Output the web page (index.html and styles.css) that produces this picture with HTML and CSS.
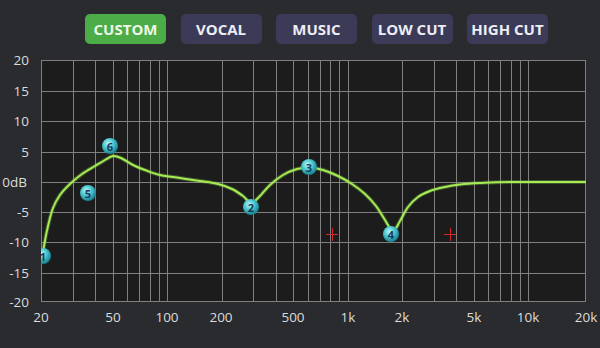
FILE: index.html
```html
<!DOCTYPE html>
<html lang="en">
<head>
    <meta charset="UTF-8">
    <meta name="viewport" content="width=device-width, initial-scale=1.0">
    <title>Equalizer</title>
    <link rel="stylesheet" href="styles.css">
</head>
<body>

    <!-- Preset buttons -->
    <div class="presets">
        <button class="preset active">CUSTOM</button>
        <button class="preset">VOCAL</button>
        <button class="preset">MUSIC</button>
        <button class="preset">LOW CUT</button>
        <button class="preset">HIGH CUT</button>
    </div>

    <!-- EQ curve -->
    <svg class="chart" width="600" height="298" viewBox="0 50 600 298">
        <defs>
            <clipPath id="plot-clip">
                <rect x="41" y="60" width="545" height="242"/>
            </clipPath>
            <radialGradient id="node-fill" cx="40%" cy="35%" r="65%">
                <stop offset="0" stop-color="#bff6f8"/>
                <stop offset="0.45" stop-color="#52ccd6"/>
                <stop offset="1" stop-color="#17808f"/>
            </radialGradient>
        </defs>

        <rect class="plot-bg" x="41" y="60" width="545" height="242"/>

        <g class="grid">
            <!-- dB lines -->
            <line x1="41" x2="586" y1="60.5" y2="60.5"/>
            <line x1="41" x2="586" y1="91.5" y2="91.5"/>
            <line x1="41" x2="586" y1="121.5" y2="121.5"/>
            <line x1="41" x2="586" y1="152.5" y2="152.5"/>
            <line x1="41" x2="586" y1="182.5" y2="182.5"/>
            <line x1="41" x2="586" y1="212.5" y2="212.5"/>
            <line x1="41" x2="586" y1="242.5" y2="242.5"/>
            <line x1="41" x2="586" y1="273.5" y2="273.5"/>
            <line x1="41" x2="586" y1="301.5" y2="301.5"/>
        </g>
        <g class="grid" id="freq-lines"></g>

        <g class="ylabels">
            <text x="29" y="60">20</text>
            <text x="29" y="91">15</text>
            <text x="29" y="121">10</text>
            <text x="29" y="152">5</text>
            <text x="27" y="182">0dB</text>
            <text x="29" y="212">-5</text>
            <text x="29" y="242">-10</text>
            <text x="29" y="273">-15</text>
            <text x="29" y="302">-20</text>
        </g>

        <g class="xlabels">
            <text x="41" y="317">20</text>
            <text x="113" y="317">50</text>
            <text x="167" y="317">100</text>
            <text x="221" y="317">200</text>
            <text x="293" y="317">500</text>
            <text x="348" y="317">1k</text>
            <text x="402" y="317">2k</text>
            <text x="474" y="317">5k</text>
            <text x="528" y="317">10k</text>
            <text x="586" y="317">20k</text>
        </g>

        <g clip-path="url(#plot-clip)">
            <path class="curve-glow" id="curve-glow" d=""/>
            <path class="curve" id="curve" d=""/>

            <g class="cross">
                <line x1="326" x2="338" y1="234.5" y2="234.5"/>
                <line x1="332.5" x2="332.5" y1="228" y2="241"/>
                <line x1="444" x2="456" y1="234.5" y2="234.5"/>
                <line x1="450.5" x2="450.5" y1="228" y2="241"/>
            </g>

            <g class="node"><circle cx="43" cy="256" r="8"/><text x="43" y="256">1</text></g>
            <g class="node"><circle cx="251" cy="207" r="8"/><text x="251" y="207">2</text></g>
            <g class="node"><circle cx="309" cy="167" r="8"/><text x="309" y="167">3</text></g>
            <g class="node"><circle cx="391" cy="234" r="8"/><text x="391" y="234">4</text></g>
            <g class="node"><circle cx="88" cy="193" r="8"/><text x="88" y="193">5</text></g>
            <g class="node"><circle cx="110" cy="146" r="8"/><text x="110" y="146">6</text></g>
        </g>
    </svg>

    <script src="script.js"></script>

</body>
</html>
```

FILE: styles.css
```css
body {
    margin: 0;
    width: 600px;
    height: 348px;
    overflow: hidden;
    background-color: #2a2b2e;
    font-family: "Open Sans", "DejaVu Sans", sans-serif;
}

.presets {
    display: flex;
    gap: 14.5px;
    padding: 14px 0 0 85px;
    height: 36px;
}

.preset {
    width: 81px;
    height: 30px;
    padding: 0;
    border: none;
    border-radius: 5px;
    background-color: #3b3b58;
    color: #eceef4;
    font-family: "Open Sans", "DejaVu Sans", sans-serif;
    font-size: 15px;
    font-weight: 700;
    cursor: pointer;
}

.preset.active {
    background-color: #4bac48;
    color: #eef8e8;
}

.chart {
    display: block;
}

.plot-bg {
    fill: #1d1c1d;
}

.grid line {
    stroke: #7f7f7f;
    stroke-width: 1;
}

.ylabels text {
    fill: #dcdcdc;
    font-size: 13.5px;
    text-anchor: end;
    dominant-baseline: central;
}

.xlabels text {
    fill: #dcdcdc;
    font-size: 13.5px;
    text-anchor: middle;
    dominant-baseline: central;
}

.curve {
    fill: none;
    stroke: #a6ea55;
    stroke-width: 2;
    stroke-linejoin: round;
    stroke-linecap: round;
}

.curve-glow {
    fill: none;
    stroke: rgba(140, 220, 70, 0.3);
    stroke-width: 4;
    stroke-linejoin: round;
}

.cross line {
    stroke: #d42a2a;
    stroke-width: 1;
}

.node circle {
    fill: url(#node-fill);
}

.node text {
    fill: #183a58;
    font-size: 11px;
    font-weight: 700;
    text-anchor: middle;
    dominant-baseline: central;
}
```

FILE: script.js
```js
// frequency grid: 20Hz .. 20kHz on a log scale
const left = 41;
const pxPerDecade = 180.5;
const freqs = [30, 40, 50, 60, 70, 80, 90, 100, 200, 300, 400, 500, 600, 700, 800, 900,
    1000, 2000, 3000, 4000, 5000, 6000, 7000, 8000, 9000, 10000];

const freqLines = document.getElementById('freq-lines');
const svgNS = 'http://www.w3.org/2000/svg';

function addLine(x) {
    const line = document.createElementNS(svgNS, 'line');
    line.setAttribute('x1', x);
    line.setAttribute('x2', x);
    line.setAttribute('y1', 60);
    line.setAttribute('y2', 302);
    freqLines.appendChild(line);
}

addLine(41.5);
freqs.forEach(f => {
    const x = Math.round(left + Math.log10(f / 20) * pxPerDecade) + 0.5;
    addLine(x);
});
addLine(585.5);

// response curve, traced by hand, smoothed with catmull-rom
const points = [
    [42, 262], [44, 246], [48, 226], [53, 208], [60, 195], [70, 184],
    [82, 174], [95, 166], [105, 160], [113, 156], [121, 158],
    [133, 165], [145, 170], [160, 175], [180, 178], [200, 181],
    [218, 184], [232, 189], [243, 196], [251, 203], [259, 197],
    [270, 185], [283, 175], [297, 169], [310, 167.5], [323, 170],
    [338, 176], [352, 184], [365, 194], [376, 206], [385, 220], [393, 231],
    [400, 221], [408, 207], [418, 197], [430, 191],
    [445, 187], [460, 184.5], [480, 183], [510, 182], [586, 182]
];

function smoothPath(p) {
    let d = 'M' + p[0][0] + ',' + p[0][1];
    for (let i = 0; i < p.length - 1; i++) {
        const p0 = p[i - 1] || p[i];
        const p1 = p[i];
        const p2 = p[i + 1];
        const p3 = p[i + 2] || p2;
        const c1x = p1[0] + (p2[0] - p0[0]) / 6;
        const c1y = p1[1] + (p2[1] - p0[1]) / 6;
        const c2x = p2[0] - (p3[0] - p1[0]) / 6;
        const c2y = p2[1] - (p3[1] - p1[1]) / 6;
        d += ' C' + c1x.toFixed(1) + ',' + c1y.toFixed(1) + ' ' +
            c2x.toFixed(1) + ',' + c2y.toFixed(1) + ' ' + p2[0] + ',' + p2[1];
    }
    return d;
}

const d = smoothPath(points);
document.getElementById('curve').setAttribute('d', d);
document.getElementById('curve-glow').setAttribute('d', d);
```
